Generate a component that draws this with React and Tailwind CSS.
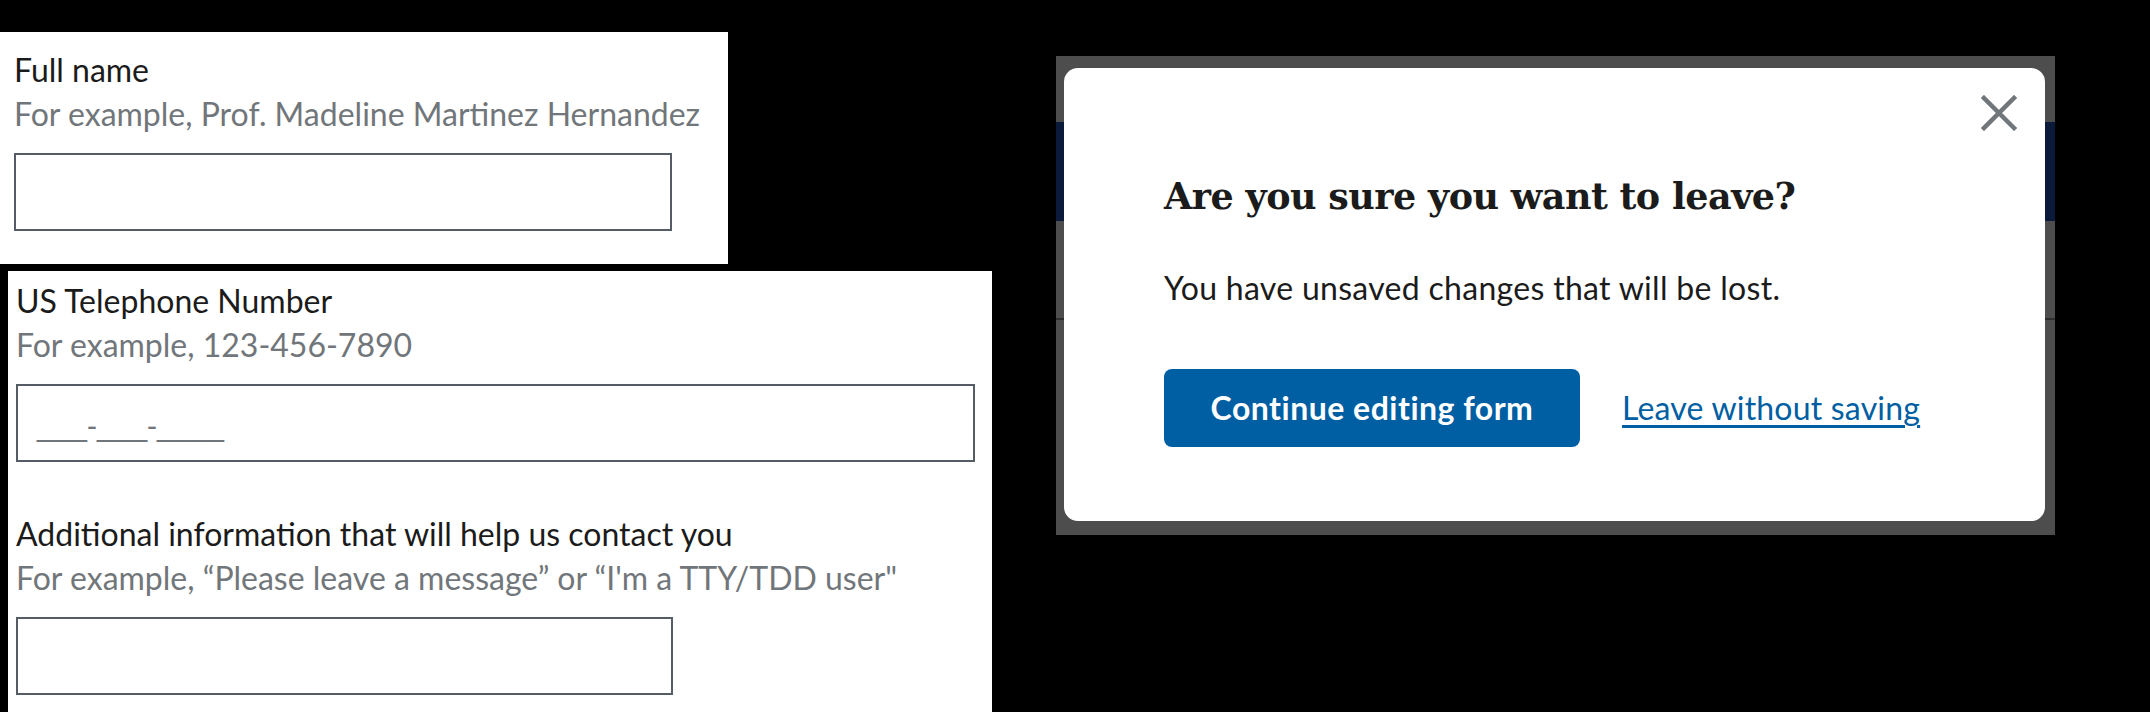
const sans = "font-['Lato','Open_Sans',sans-serif]";

function Field({ label, hint, placeholder, inputClass }) {
  return (
    <div>
      <p className="text-[32px] leading-[44px] text-[#1b1b1b]">{label}</p>
      <p className="text-[32px] leading-[44px] text-[#71767a]">{hint}</p>
      <div
        className={`mt-[17px] flex h-[78px] items-center border-2 border-[#565c65] bg-white px-[19px] ${inputClass}`}
      >
        {placeholder ? (
          <span className="pt-[6px] font-['Liberation_Sans',Arial,sans-serif] text-[30px] leading-[44px] text-[#71767a]">
            {placeholder}
          </span>
        ) : null}
      </div>
    </div>
  );
}

function CloseIcon() {
  return (
    <svg width="36" height="36" viewBox="0 0 36 36" fill="none">
      <path d="M3 3L33 33M33 3L3 33" stroke="#71767a" strokeWidth="4.5" strokeLinecap="square" />
    </svg>
  );
}

function LeaveModal() {
  return (
    <div className="relative mt-[56px] ml-[64px] h-[479px] w-[999px] bg-[#4d4d4d]">
      {/* page behind the overlay */}
      <div className="mt-[66px] h-[99px] bg-[#0b1a3a]" />
      <div className="mt-[97px] h-[2px] bg-[#2e2e2e]" />

      <div className="absolute top-[12px] left-[8px] h-[453px] w-[981px] rounded-[14px] bg-white px-[100px] pt-[105px]">
        <button className="absolute top-[27px] right-[28px]" aria-label="Close">
          <CloseIcon />
        </button>
        <h2 className="font-['DejaVu_Serif','Liberation_Serif',serif] text-[36.5px] leading-[48px] font-bold tracking-[-0.5px] text-[#1b1b1b]">
          Are you sure you want to leave?
        </h2>
        <p className={`mt-[45px] text-[32px] leading-[44px] tracking-[0.3px] text-[#1b1b1b] ${sans}`}>
          You have unsaved changes that will be lost.
        </p>
        <div className={`mt-[59px] flex items-center gap-[42px] ${sans}`}>
          <button className="h-[78px] w-[416px] rounded-[8px] bg-[#005ea2] text-[32px] font-bold tracking-[0.5px] text-white">
            Continue editing form
          </button>
          <a href="#" className="text-[32px] leading-[44px] tracking-[0.2px] text-[#005ea2] underline underline-offset-[5px]">
            Leave without saving
          </a>
        </div>
      </div>
    </div>
  );
}

export default function App() {
  return (
    <div className={`flex h-[712px] w-[2150px] overflow-hidden bg-black ${sans}`}>
      <div className="pt-[32px]">
        <div className="h-[232px] w-[728px] bg-white px-[14px] pt-[16px]">
          <Field
            label="Full name"
            hint="For example, Prof. Madeline Martinez Hernandez"
            inputClass="w-[658px]"
          />
        </div>
        <div className="mt-[7px] ml-[8px] h-[441px] w-[984px] bg-white px-[8px] pt-[8px]">
          <Field
            label="US Telephone Number"
            hint="For example, 123-456-7890"
            placeholder="___-___-____"
            inputClass="w-[959px]"
          />
          <div className="mt-[50px]">
            <Field
              label="Additional information that will help us contact you"
              hint={"For example, \u201cPlease leave a message\u201d or \u201cI'm a TTY/TDD user\""}
              inputClass="w-[657px]"
            />
          </div>
        </div>
      </div>
      <LeaveModal />
    </div>
  );
}
